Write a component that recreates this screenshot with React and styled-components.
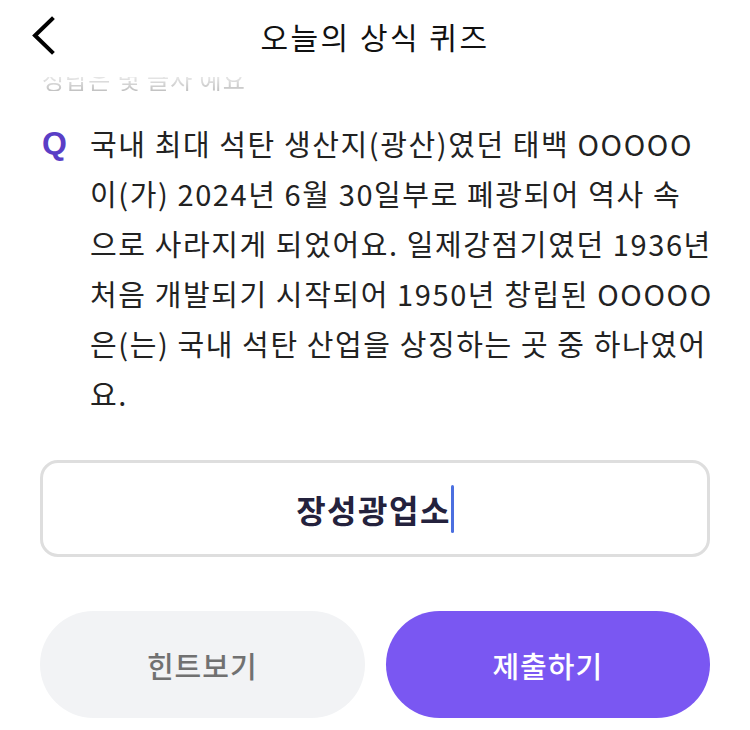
import React from "react";
import styled, { createGlobalStyle } from "styled-components";

const Global = createGlobalStyle`
  html, body { margin: 0; padding: 0; background: #ffffff; }
  body { font-family: "Noto Sans CJK KR", "Noto Sans", sans-serif; }
`;

const Page = styled.div`
  width: 750px;
  height: 730px;
  overflow: hidden;
  background: #ffffff;
  display: flex;
  flex-direction: column;
`;

const Header = styled.header`
  height: 72px;
  display: grid;
  grid-template-columns: 90px 1fr 90px;
  align-items: center;
`;

const BackButton = styled.button`
  border: 0;
  background: none;
  padding: 0 0 0 31px;
  height: 40px;
  display: flex;
  align-items: center;
  cursor: pointer;
`;

const Title = styled.h1`
  margin: 0;
  text-align: center;
  font-size: 30px;
  font-weight: 400;
  color: #111111;
  letter-spacing: 2.5px;
`;

const Peek = styled.div`
  margin-top: 5px;
  height: 14px;
  overflow: hidden;
  display: flex;
  align-items: flex-end;
  padding-left: 42px;
  -webkit-mask-image: linear-gradient(to bottom, rgba(0,0,0,0.4), #000);
  mask-image: linear-gradient(to bottom, rgba(0,0,0,0.4), #000);
`;

const PeekText = styled.span`
  font-size: 24px;
  line-height: 24px;
  color: #c2c2c2;
  white-space: nowrap;
  letter-spacing: 1px;
`;

const Content = styled.main`
  padding: 0 40px;
  display: flex;
  flex-direction: column;
`;

const Question = styled.section`
  margin-top: 27px;
  padding-left: 2px;
  display: grid;
  grid-template-columns: 48px 1fr;
`;

const QMark = styled.span`
  font-family: "Liberation Sans", Arial, sans-serif;
  font-weight: 700;
  font-size: 32px;
  line-height: 50px;
  color: #5a3ec6;
`;

const QText = styled.p`
  margin: 0;
  font-size: 29px;
  line-height: 50px;
  color: #222222;
  letter-spacing: 1.6px;
`;

const Line = styled.span`
  display: block;
  white-space: nowrap;
`;

const AnswerBox = styled.div`
  margin-top: 42px;
  height: 97px;
  box-sizing: border-box;
  border: 3px solid #dedede;
  border-radius: 18px;
  display: flex;
  align-items: center;
  justify-content: center;
`;

const AnswerText = styled.span`
  font-size: 32px;
  font-weight: 700;
  color: #24223d;
  letter-spacing: 1.5px;
`;

const Caret = styled.span`
  width: 3px;
  height: 48px;
  border-radius: 2px;
  background: #4b6fe0;
`;

const Actions = styled.div`
  margin-top: 54px;
  display: grid;
  grid-template-columns: 1fr 1fr;
  gap: 21px;
`;

const ActionButton = styled.button`
  height: 107px;
  border: 0;
  border-radius: 54px;
  font-family: "Noto Sans CJK KR", sans-serif;
  font-size: 29px;
  font-weight: 500;
  letter-spacing: 1px;
  background: ${(p) => (p.$primary ? "#7a57f2" : "#f2f3f5")};
  color: ${(p) => (p.$primary ? "#ffffff" : "#717171")};
  cursor: pointer;
`;

const lines = [
  "국내 최대 석탄 생산지(광산)였던 태백 OOOOO",
  "이(가) 2024년 6월 30일부로 폐광되어 역사 속",
  "으로 사라지게 되었어요. 일제강점기였던 1936년",
  "처음 개발되기 시작되어 1950년 창립된 OOOOO",
  "은(는) 국내 석탄 산업을 상징하는 곳 중 하나였어",
  "요.",
];

export default function App() {
  return (
    <Page>
      <Global />
      <Header>
        <BackButton aria-label="뒤로">
          <svg width="26" height="40" viewBox="0 0 26 40" fill="none">
            <path d="M21 3 L4 19.5 L21 36" stroke="#000" strokeWidth="4" strokeLinecap="square" strokeLinejoin="miter" />
          </svg>
        </BackButton>
        <Title>오늘의 상식 퀴즈</Title>
        <span />
      </Header>
      <Peek>
        <PeekText>정답은 몇 글자 예요</PeekText>
      </Peek>
      <Content>
        <Question>
          <QMark>Q</QMark>
          <QText>
            {lines.map((l) => (
              <Line key={l}>{l}</Line>
            ))}
          </QText>
        </Question>
        <AnswerBox>
          <AnswerText>장성광업소</AnswerText>
          <Caret />
        </AnswerBox>
        <Actions>
          <ActionButton>힌트보기</ActionButton>
          <ActionButton $primary>제출하기</ActionButton>
        </Actions>
      </Content>
    </Page>
  );
}
